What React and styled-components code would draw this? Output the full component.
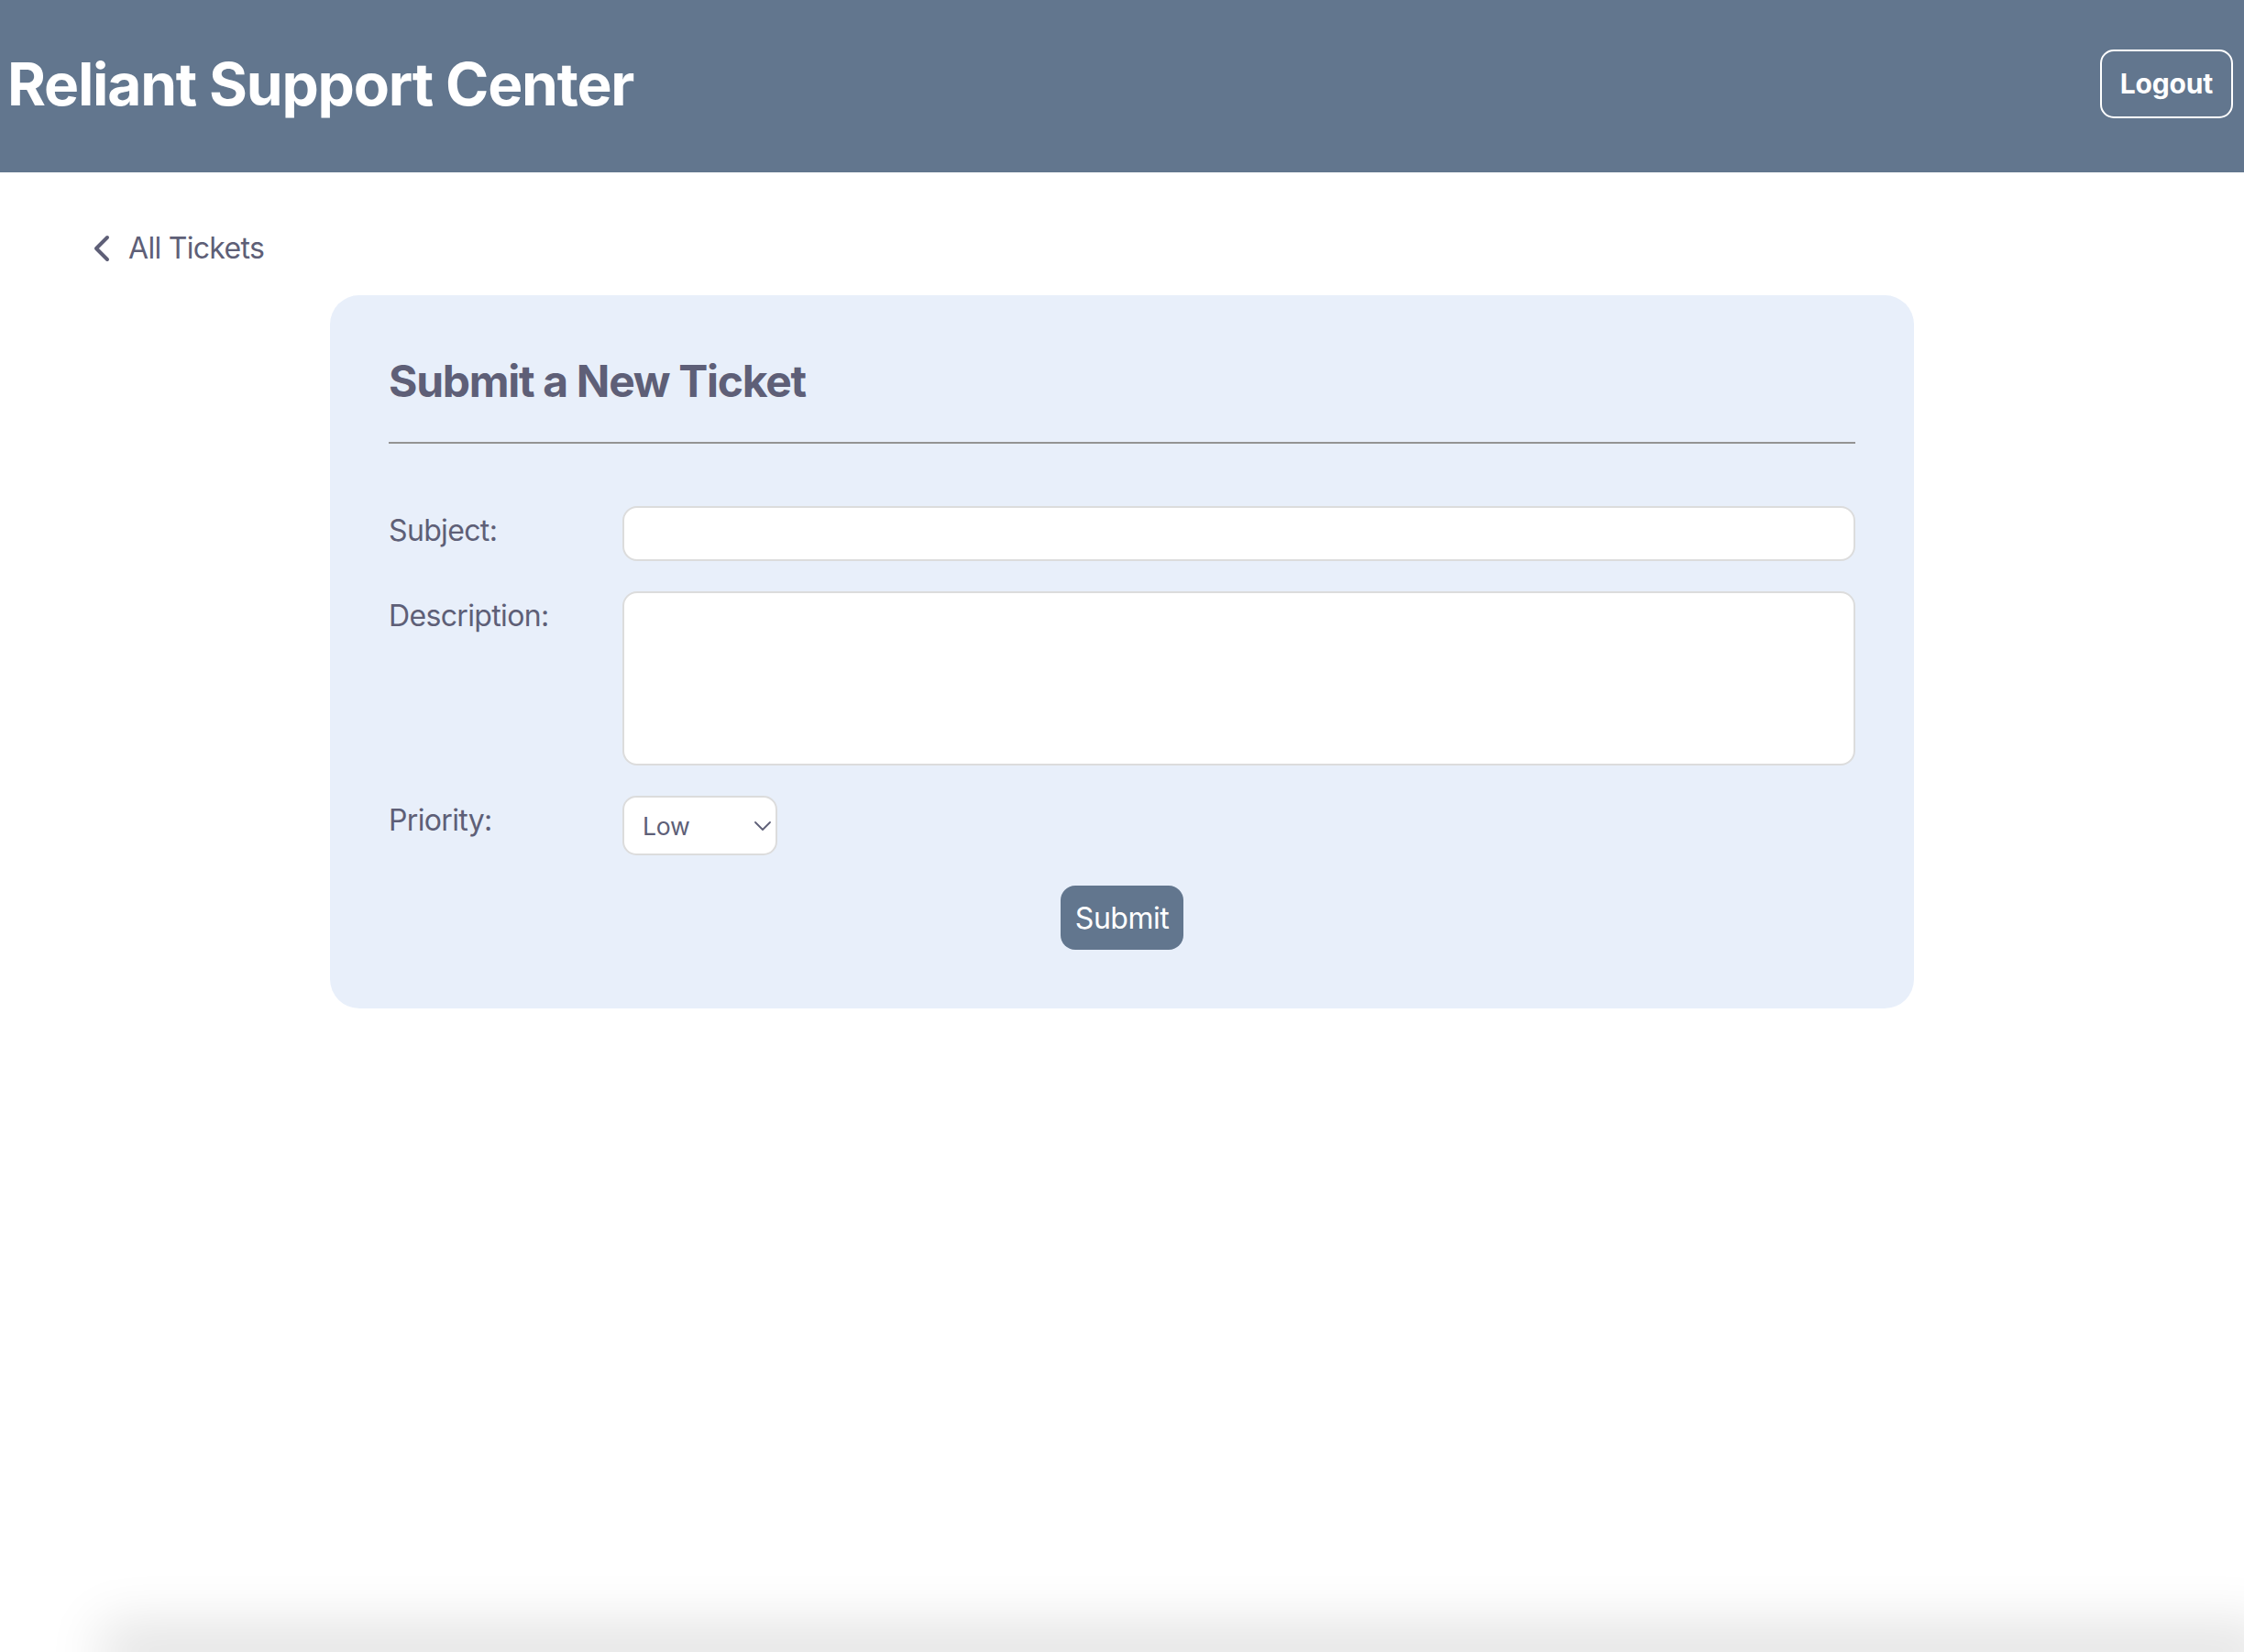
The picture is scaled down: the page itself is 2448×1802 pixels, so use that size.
import React from 'react';
import styled, { createGlobalStyle } from 'styled-components';

const GlobalStyle = createGlobalStyle`
  * {
    box-sizing: border-box;
  }
  body {
    margin: 0;
    background: #fff;
    font-family: Inter, 'Noto Sans', 'Liberation Sans', sans-serif;
    color: #5e5f77;
  }
`;

export default function App() {
  return (
    <>
      <GlobalStyle />
      <Page>
        <Header>
          <Brand>Reliant Support Center</Brand>
          <LogoutButton type="button">Logout</LogoutButton>
        </Header>

        <Main>
          <BackLink href="#">
            <svg width="20" height="30" viewBox="0 0 20 30" fill="none">
              <polyline
                points="16,3 4,15 16,27"
                stroke="currentColor"
                strokeWidth="4"
                strokeLinecap="round"
                strokeLinejoin="round"
              />
            </svg>
            All Tickets
          </BackLink>

          <Card>
            <CardTitle>Submit a New Ticket</CardTitle>
            <Divider />
            <Form onSubmit={(e) => e.preventDefault()}>
              <FieldRow>
                <Label htmlFor="subject">Subject:</Label>
                <TextInput id="subject" type="text" />
              </FieldRow>
              <FieldRow>
                <Label htmlFor="description">Description:</Label>
                <TextArea id="description" />
              </FieldRow>
              <FieldRow>
                <Label htmlFor="priority">Priority:</Label>
                <SelectWrap>
                  <Select id="priority" defaultValue="low">
                    <option value="low">Low</option>
                    <option value="medium">Medium</option>
                    <option value="high">High</option>
                  </Select>
                  <SelectArrow width="18" height="10" viewBox="0 0 18 10" fill="none">
                    <polyline
                      points="1,1 9,9 17,1"
                      stroke="currentColor"
                      strokeWidth="1.8"
                      strokeLinecap="round"
                      strokeLinejoin="round"
                    />
                  </SelectArrow>
                </SelectWrap>
              </FieldRow>
              <SubmitButton type="submit">Submit</SubmitButton>
            </Form>
          </Card>
        </Main>

        <ScreenEdge />
      </Page>
    </>
  );
}

const Page = styled.div`
  min-height: 100vh;
  display: flex;
  flex-direction: column;
`;

const Header = styled.header`
  height: 188px;
  background-color: #62768e;
  display: flex;
  align-items: center;
  justify-content: space-between;
  padding: 0 12px 6px 8px;
`;

const Brand = styled.h1`
  margin: 0;
  color: #fff;
  font-size: 64px;
  font-weight: 700;
  letter-spacing: -1.2px;
`;

const LogoutButton = styled.button`
  height: 75px;
  padding: 0 20px;
  display: flex;
  align-items: center;
  background: transparent;
  border: 2px solid #fff;
  border-radius: 15px;
  color: #fff;
  font-family: inherit;
  font-size: 30px;
  font-weight: 700;
  letter-spacing: -0.2px;
  cursor: pointer;
`;

const Main = styled.main`
  padding-top: 63px;
  display: flex;
  flex-direction: column;
`;

const BackLink = styled.a`
  align-self: flex-start;
  margin-left: 101px;
  display: inline-flex;
  align-items: center;
  gap: 19px;
  color: #5e5f77;
  font-size: 32px;
  letter-spacing: -0.7px;
  text-decoration: none;
`;

const Card = styled.section`
  width: 1728px;
  margin: 32px auto 0;
  padding: 64px;
  background-color: #e8effa;
  border-radius: 32px;
`;

const CardTitle = styled.h2`
  margin: 0;
  font-size: 48px;
  font-weight: 700;
  color: #5e5f77;
  letter-spacing: -1.3px;
`;

const Divider = styled.hr`
  margin: 37px 0 68px;
  border: none;
  border-top: 2px solid #939393;
`;

const Form = styled.form`
  display: flex;
  flex-direction: column;
  gap: 33px;
`;

const FieldRow = styled.div`
  display: grid;
  grid-template-columns: 255px 1fr;
  align-items: start;
`;

const Label = styled.label`
  padding-top: 7px;
  font-size: 32px;
  letter-spacing: -0.65px;
  color: #5e5f77;
`;

const fieldBase = `
  display: block;
  width: 100%;
  background: #fff;
  border: 2px solid #dcdcdc;
  border-radius: 16px;
  font-family: inherit;
  font-size: 30px;
  color: #5e5f77;
  outline: none;
`;

const TextInput = styled.input`
  ${fieldBase}
  height: 60px;
  padding: 0 18px;
`;

const TextArea = styled.textarea`
  ${fieldBase}
  height: 190px;
  padding: 14px 18px;
  resize: none;
`;

const SelectWrap = styled.div`
  position: relative;
  width: 169px;
  color: #5e5f77;
`;

const Select = styled.select`
  ${fieldBase}
  appearance: none;
  height: 65px;
  padding: 0 40px 0 20px;
  border-radius: 15px;
  font-size: 26.67px;
  letter-spacing: -0.3px;
`;

const SelectArrow = styled.svg`
  position: absolute;
  right: 7px;
  top: 50%;
  transform: translateY(-50%);
  pointer-events: none;
`;

const SubmitButton = styled.button`
  align-self: center;
  height: 70px;
  padding: 0 16px;
  background-color: #62768e;
  border: none;
  border-radius: 16px;
  color: #fff;
  font-family: inherit;
  font-size: 32px;
  letter-spacing: -0.5px;
  cursor: pointer;
`;

const ScreenEdge = styled.div`
  margin-top: auto;
  margin-left: 140px;
  height: 0;
  border-radius: 40px;
  box-shadow: 0 0 60px 30px rgba(0, 0, 0, 0.12);
`;
